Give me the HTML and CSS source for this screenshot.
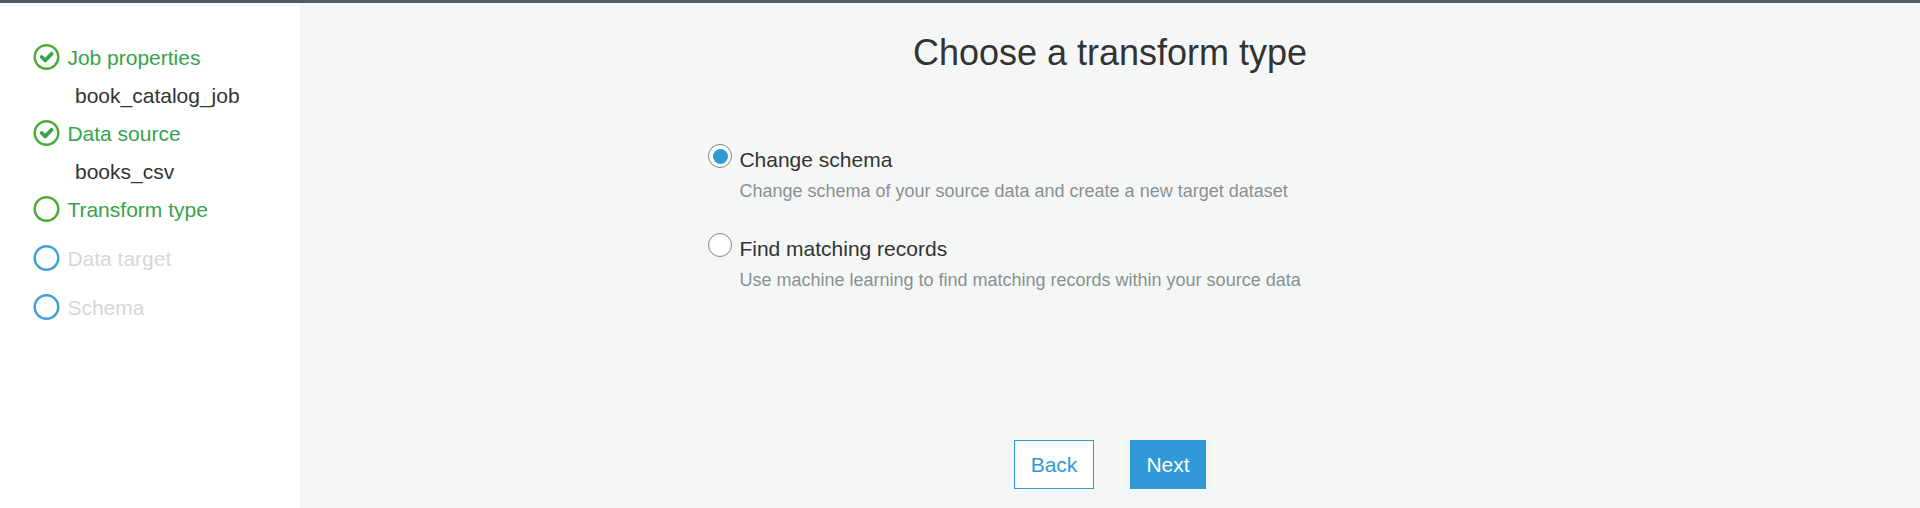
FILE: index.html
```html
<!DOCTYPE html>
<html lang="en">
<head>
<meta charset="utf-8">
<title>Choose a transform type</title>
<link rel="stylesheet" href="styles.css">
</head>
<body>
<div class="wizard">
  <nav class="steps">
    <div class="step done">
      <svg class="mark" viewBox="0 0 26 26"><circle cx="13" cy="13" r="11.8"/><path d="M8.2 13l3.5 3.4 6.4-6.6"/></svg>
      <span>Job properties</span>
    </div>
    <div class="value">book_catalog_job</div>
    <div class="step done">
      <svg class="mark" viewBox="0 0 26 26"><circle cx="13" cy="13" r="11.8"/><path d="M8.2 13l3.5 3.4 6.4-6.6"/></svg>
      <span>Data source</span>
    </div>
    <div class="value">books_csv</div>
    <div class="step current">
      <svg class="mark" viewBox="0 0 26 26"><circle cx="13" cy="13" r="11.8"/></svg>
      <span>Transform type</span>
    </div>
    <div class="step pending">
      <svg class="mark" viewBox="0 0 26 26"><circle cx="13" cy="13" r="11.8"/></svg>
      <span>Data target</span>
    </div>
    <div class="step pending">
      <svg class="mark" viewBox="0 0 26 26"><circle cx="13" cy="13" r="11.8"/></svg>
      <span>Schema</span>
    </div>
  </nav>
  <main class="content">
    <h1 class="title">Choose a transform type</h1>
    <div class="options">
      <label class="option">
        <input class="radio" type="radio" name="transform" checked>
        <span class="text"><span class="name">Change schema</span><span class="hint">Change schema of your source data and create a new target dataset</span></span>
      </label>
      <label class="option">
        <input class="radio" type="radio" name="transform">
        <span class="text"><span class="name">Find matching records</span><span class="hint">Use machine learning to find matching records within your source data</span></span>
      </label>
    </div>
    <div class="actions">
      <button class="button back" type="button">Back</button>
      <button class="button next" type="button">Next</button>
    </div>
  </main>
</div>
</body>
</html>
```

FILE: styles.css
```css
* { box-sizing: border-box; }

body {
  margin: 0;
  font: 21px/38px "Liberation Sans", Arial, sans-serif;
  color: #333;
  background: #f5f7f7;
}

.wizard {
  display: flex;
  height: 508px;
  border-top: 3px solid #545b5e;
  overflow: hidden;
}

.steps {
  flex: none;
  width: 300px;
  padding: 36px 0 0 33px;
  background: #fff;
}

.step {
  display: flex;
  gap: 7.4px;
  height: 38px;
  color: #37a34a;
}

.current, .pending { margin-bottom: 11px; }
.pending { color: #d5d8d9; }

.mark {
  flex: none;
  width: 27px;
  height: 26px;
  margin-top: 5px;
  fill: none;
  stroke: #4aae34;
  stroke-width: 2.4;
}

.mark path {
  stroke: #37a34a;
  stroke-width: 3.8;
  stroke-linecap: round;
  stroke-linejoin: round;
}

.pending .mark { stroke: #419fdb; }

.value {
  height: 38px;
  padding-left: 42px;
}

.content {
  flex: 1;
  display: flex;
  flex-direction: column;
  align-items: center;
}

.title {
  margin: 29px 0 0;
  font-size: 36px;
  font-weight: 400;
  line-height: 42px;
}

.options {
  width: 804px;
  margin-top: 67px;
}

.option {
  display: flex;
  gap: 7.4px;
  height: 89px;
}

.radio {
  appearance: none;
  display: grid;
  place-items: center;
  flex: none;
  width: 24px;
  height: 24px;
  margin: 3px 0 0;
  border: 1px solid #7f8788;
  border-radius: 50%;
  background: #fff;
}

.radio:checked::before {
  content: "";
  width: 15px;
  height: 15px;
  border-radius: 50%;
  background: #3199d8;
}

.text {
  display: flex;
  flex-direction: column;
}

.name { line-height: 38px; }

.hint {
  font-size: 18px;
  line-height: 24px;
  color: #899193;
}

.actions {
  display: flex;
  gap: 36px;
  margin-top: 121px;
}

.button {
  width: 80px;
  height: 49px;
  padding: 0;
  border: 1px solid #3199d8;
  font: inherit;
  color: #3199d8;
  background: #fff;
}

.next {
  width: 76px;
  color: #fff;
  background: #3199d8;
}
```
